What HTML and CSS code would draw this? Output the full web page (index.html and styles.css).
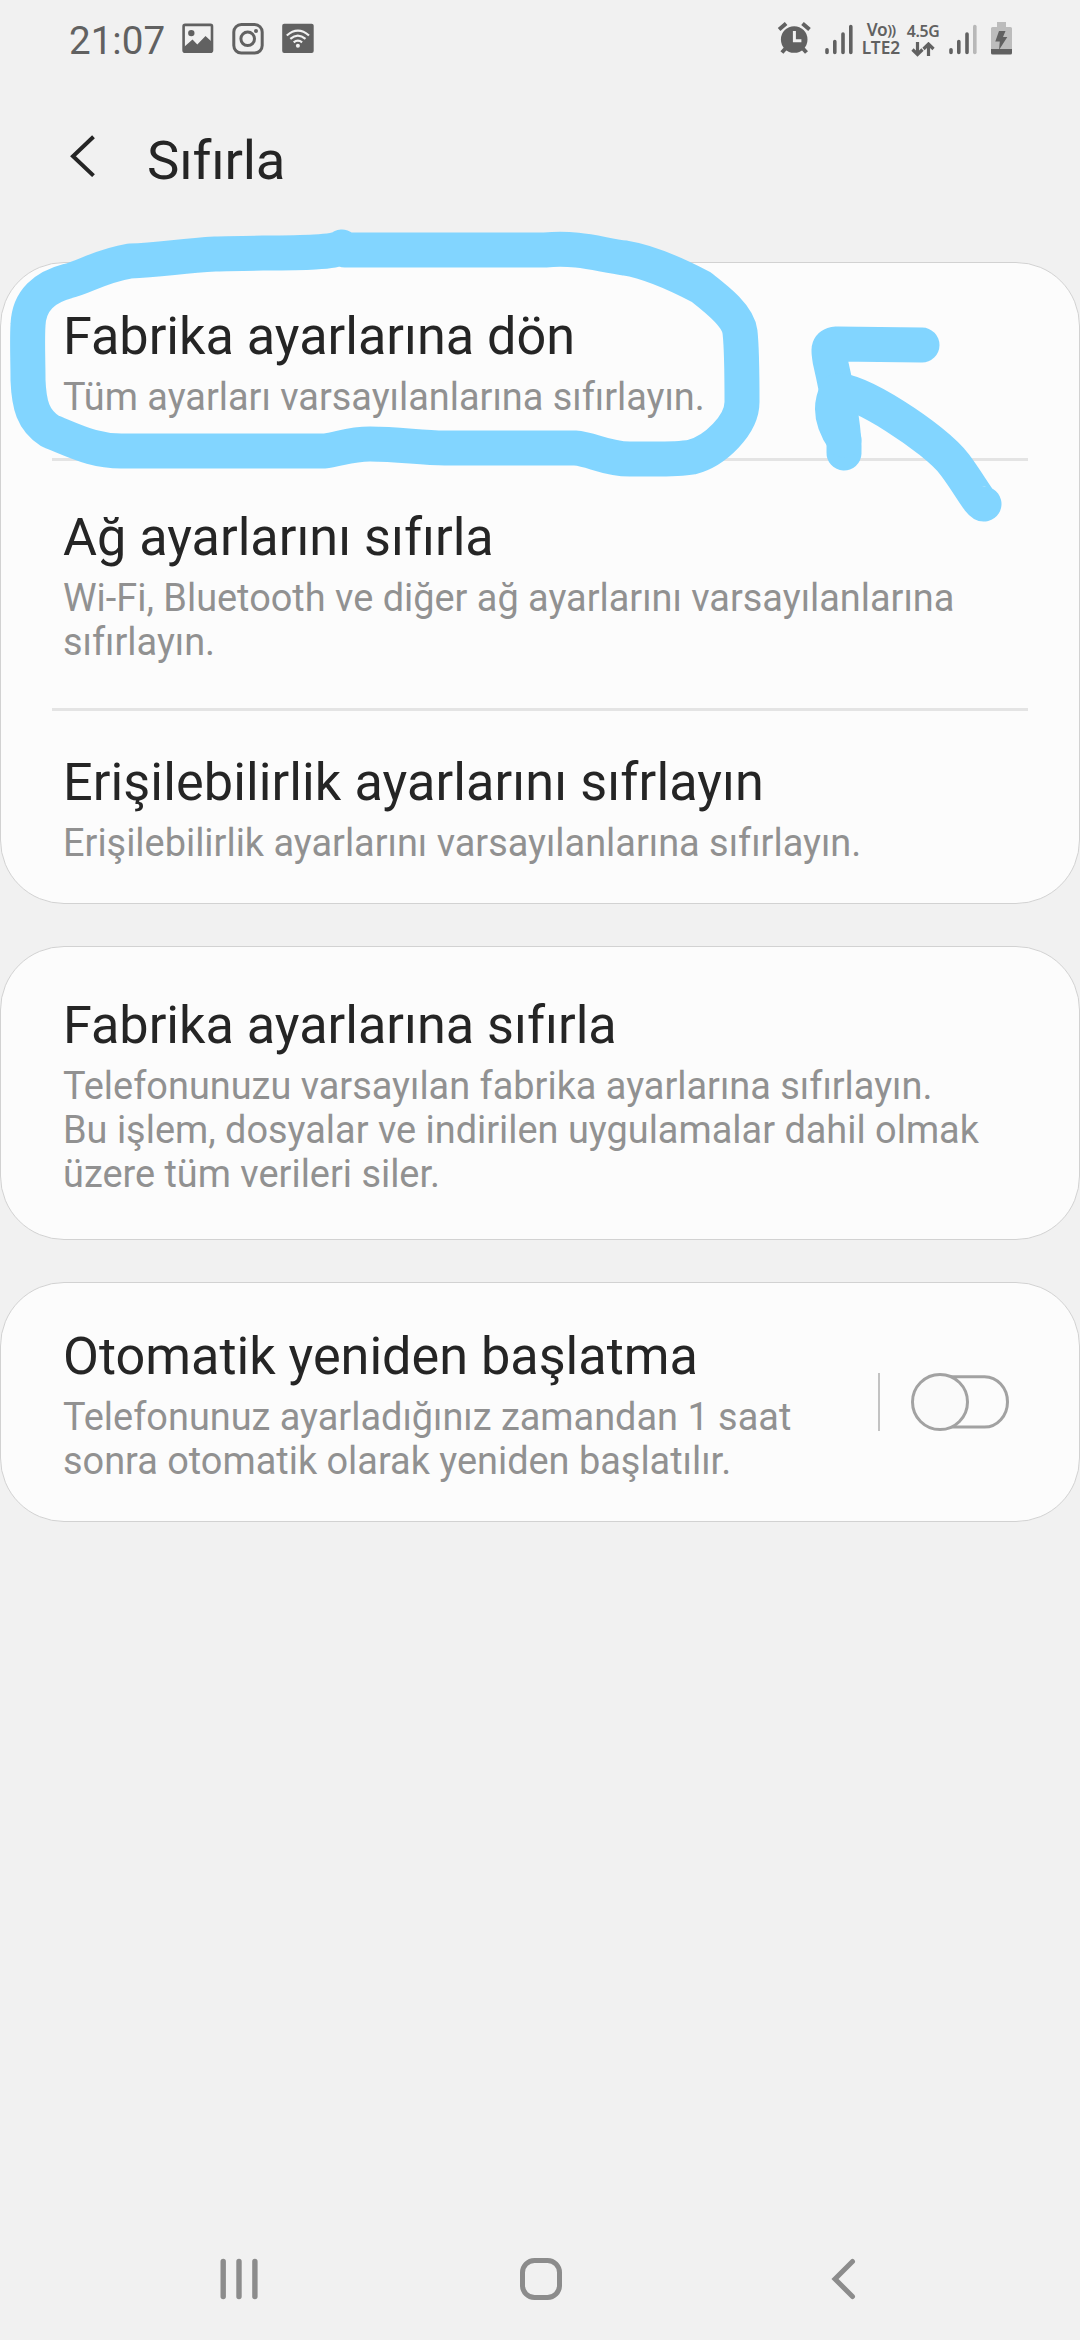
FILE: index.html
```html
<!DOCTYPE html>
<html lang="tr">
<head>
<meta charset="utf-8">
<title>Sıfırla</title>
<link rel="stylesheet" href="styles.css">
</head>
<body>
<div class="screen">
  <header class="status">
    <div class="status-left">
      <span class="clock">21:07</span>
      <svg class="ic-note" width="32" height="32" viewBox="0 0 32 32"><rect x="1.6" y="1.9" width="28.4" height="26.8" rx="1.5" fill="none" stroke="#616161" stroke-width="2.6"/><circle cx="9.3" cy="10.1" r="3.2"/><path d="M2 24l8.500-7.500 4.800 5L23.500 13l6.500 6v9.500H2z"/></svg>
      <svg class="ic-note line" width="32" height="32" viewBox="0 0 32 32" stroke="#616161"><rect x="1.800" y="1.500" width="28.400" height="28.600" rx="7.500" stroke-width="3"/><circle cx="15.700" cy="15.800" r="6.800" stroke-width="3"/><circle cx="24" cy="8" r="2" fill="#616161" stroke="none"/></svg>
      <svg class="ic-note" width="32" height="32" viewBox="0 0 32 32"><rect x=".2" y=".8" width="31.500" height="29.200" rx="2"/><g fill="none" stroke="#f1f1f1" stroke-width="2.200"><path d="M4.800 12.500q11.100-9.600 22.200 0M8.300 15.900q7.600-6.400 15.200 0M11.700 19.300q4.200-3.500 8.400 0"/></g><circle cx="15.900" cy="22.800" r="2" fill="#f1f1f1"/></svg>
    </div>
    <div class="status-right">
      <svg width="34" height="34" viewBox="0 0 34 34"><circle cx="17.200" cy="17.500" r="13.300"/><g stroke="#616161" stroke-width="4"><path d="M2.100 7.500l7-6M32.500 7.500l-7-6"/><path d="M9.400 25.500l-4.500 5M25 25.500l4.500 5"/></g><path d="M17.400 9v9.800h7" fill="none" stroke="#f1f1f1" stroke-width="3"/></svg>
      <svg class="sig1" width="28" height="32" viewBox="0 0 28 32"><g stroke="#616161" stroke-width="3.600" stroke-linecap="round"><path d="M2 25.800v2.700M9.800 17.500v11M18 10v18.500M25.800 2.500v26"/></g></svg>
      <div class="volte"><span class="vo">Vo<span class="waves">))</span></span><span>LTE2</span></div>
      <div class="net"><span>4.5G</span><svg class="line" width="24" height="15" viewBox="0 0 24 15" stroke="#616161" stroke-width="3.200"><path d="M6.500 0v12M1.500 7.500l5 5 5-5M17.500 14V2.500M12.500 7l5-5 5 5"/></svg></div>
      <svg class="sig2" width="28" height="32" viewBox="0 0 28 32"><g stroke="#616161" stroke-width="3.600" stroke-linecap="round"><path d="M2 25.800v2.700M9.800 17.500v11M18 10v18.500"/><path d="M25.800 2.500v26" stroke="#b8b8b8"/></g></svg>
      <svg class="bat" width="21" height="33" viewBox="0 0 21 33"><path d="M6 0h9v5h4.500q1.500 0 1.500 1.500V27H0V6.500Q0 5 1.500 5H6z" fill="#bcbcbc"/><path d="M0 27h21v4q0 1.500-1.500 1.500h-18Q0 32.500 0 31z"/><path d="M8 9h6.500l-2.500 6h4.300L8 28l.8-8.500H4.300z"/></svg>
    </div>
  </header>

  <div class="appbar">
    <svg class="line" width="26" height="42" viewBox="0 0 26 42"><path d="M23.500 1.800L3 21.200l20.500 19.400" stroke="#252525" stroke-width="4"/></svg>
    <h1>Sıfırla</h1>
  </div>

  <main>
    <section class="card group">
      <div class="row r1"><h2>Fabrika ayarlarına dön</h2><p>Tüm ayarları varsayılanlarına sıfırlayın.</p></div>
      <div class="row r2"><h2>Ağ ayarlarını sıfırla</h2><p>Wi-Fi, Bluetooth ve diğer ağ ayarlarını varsayılanlarına<br>sıfırlayın.</p></div>
      <div class="row r3"><h2>Erişilebilirlik ayarlarını sıfrlayın</h2><p>Erişilebilirlik ayarlarını varsayılanlarına sıfırlayın.</p></div>
    </section>
    <section class="card factory">
      <div class="row"><h2>Fabrika ayarlarına sıfırla</h2><p>Telefonunuzu varsayılan fabrika ayarlarına sıfırlayın.<br>Bu işlem, dosyalar ve indirilen uygulamalar dahil olmak<br>üzere tüm verileri siler.</p></div>
    </section>
    <section class="card auto">
      <div class="row"><h2>Otomatik yeniden başlatma</h2><p>Telefonunuz ayarladığınız zamandan 1 saat<br>sonra otomatik olarak yeniden başlatılır.</p></div>
      <div class="control"><span class="bar"></span>
        <svg class="line" width="98" height="58" viewBox="0 0 98 58" stroke="#a2a2a2" stroke-width="3"><path d="M29 3.700h44.500a23 25.200 0 0 1 0 50.400H29"/><circle cx="29" cy="29" r="27.500" fill="#fafafa"/></svg>
      </div>
    </section>
  </main>

  <nav>
    <svg width="38" height="42" viewBox="0 0 38 42"><path d="M3.200 3.500v35M19 3.500v35M34.900 3.500v35" stroke="#8c8c8c" stroke-width="5.400" stroke-linecap="round"/></svg>
    <svg class="line" width="42" height="42" viewBox="0 0 42 42"><rect x="2.500" y="2.500" width="37" height="37" rx="12" stroke="#8c8c8c" stroke-width="5"/></svg>
    <svg class="line" width="26" height="42" viewBox="0 0 26 42"><path d="M21.500 3.500L4 21l17.500 17.500" stroke="#8c8c8c" stroke-width="5" stroke-linecap="round"/></svg>
  </nav>

  <svg class="ink" width="1080" height="540" viewBox="0 0 1080 540">
    <path d="M342 247C335 255 260 252 215 254C180 256 160 260 130 261C100 266 85 277 68 281C45 287 29 300 28 325C27 340 28 360 28 380C29 405 33 420 50 431C75 441 95 452 125 451H325C340 449 350 444 370 444C400 444 420 448 445 448H575C592 449 605 459 630 459C655 459 675 460 692 457C715 451 742 425 742 402C742 370 742 350 740 332C738 315 715 298 701 287C680 276 650 262 625 258C600 255 580 247 545 250H345"/>
    <path d="M922 345L837 344C826 345 829 352 830 360C838 395 845 430 844 453"/>
    <path d="M844 440C830 420 830 405 837 391C855 387 935 438 955 465C970 485 980 505 984 504"/>
  </svg>
</div>
</body>
</html>
```
FILE: styles.css
```css
* { box-sizing: border-box; }
body { margin: 0; background: #f1f1f1; font-family: Roboto, sans-serif; color: #252525; }
h1, h2, p { margin: 0; font-weight: 400; }
svg { display: block; flex: none; fill: #616161; }
svg.line { fill: none; }
.screen { position: relative; width: 1080px; height: 2340px; overflow: hidden; display: flex; flex-direction: column; }
.status { height: 80px; display: flex; justify-content: space-between; padding: 0 68px 0 69px; color: #616161; }
.status-left, .status-right { display: flex; align-items: flex-start; }
.clock { font-size: 38.6px; line-height: 82px; width: 113px; white-space: nowrap; }
.ic-note { margin-top: 23px; margin-right: 18px; }
.status-right > svg { margin-top: 22px; }
.status-right .sig1 { margin-left: 14px; margin-top: 24px; }
.status-right .sig2 { margin-left: 9px; margin-top: 24px; }
.status-right .bat { margin-left: 14px; }
.volte, .net { font-family: "Noto Sans", sans-serif; font-weight: 600; line-height: 18px; display: flex; flex-direction: column; align-items: center; white-space: nowrap; }
.volte { width: 40px; margin: 21px 0 0 8px; font-size: 17.3px; }
.vo { height: 18px; letter-spacing: -.4px; }
.waves { font-size: 15px; line-height: 1; letter-spacing: -.8px; vertical-align: 1px; }
.net { width: 34px; margin: 22px 0 0 5px; font-size: 15.8px; letter-spacing: -.3px; gap: 2px; }
.appbar { height: 182px; display: flex; align-items: flex-start; padding: 35px 0 0 70px; }
.appbar svg { margin-top: 20px; }
h1 { font-size: 54.5px; line-height: 64px; letter-spacing: -.2px; margin: 13px 0 0 51px; }
main { display: flex; flex-direction: column; gap: 42px; }
.card { background: #fcfcfc; border: 1px solid #d2d2d2; border-radius: 64px; padding: 0 51px; }
.row { padding-left: 11px; white-space: nowrap; }
h2 { font-size: 52.2px; line-height: 62px; }
p { font-size: 37.9px; line-height: 44px; color: #919191; margin-top: 7px; }
.group { height: 642px; }
.r1 { height: 198px; padding-top: 43px; border-bottom: 3px solid #e4e4e4; }
.r2 { height: 250px; padding-top: 46px; border-bottom: 3px solid #e4e4e4; }
.r3 { padding-top: 41px; }
.r3 h2 { letter-spacing: .1px; }
.factory { height: 294px; padding-top: 48px; }
.auto { height: 240px; padding-top: 43px; display: flex; justify-content: space-between; }
.control { display: flex; align-items: center; height: 58px; margin: 47px 19px 0 0; gap: 31px; }
.bar { width: 2px; height: 58px; background: #c3c3c3; }
nav { margin-top: auto; height: 82px; display: flex; padding-left: 220px; }
nav svg:nth-child(2) { margin-left: 262px; }
nav svg:nth-child(3) { margin-left: 269px; }
.ink { position: absolute; left: 0; top: 0; fill: none; stroke: #82d5ff; stroke-width: 35px; stroke-linecap: round; stroke-linejoin: round; }
```
